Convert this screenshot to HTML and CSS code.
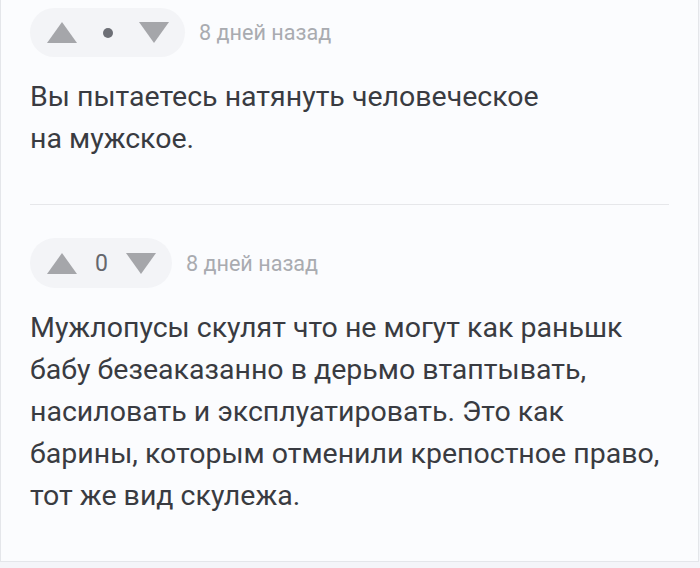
FILE: index.html
```html
<!DOCTYPE html>
<html lang="ru">
<head>
<meta charset="utf-8">
<link rel="stylesheet" href="styles.css">
</head>
<body>
<div class="frame">
  <div class="comment">
    <div class="meta">
      <div class="votes">
        <svg class="arrow" width="30" height="21" viewBox="0 0 30 21"><path d="M15 0 L30 21 L0 21 Z"/></svg>
        <span class="dot"></span>
        <svg class="arrow" width="30" height="21" viewBox="0 0 30 21"><path d="M0 0 L30 0 L15 21 Z"/></svg>
      </div>
      <span class="time">8 дней назад</span>
    </div>
    <p class="text">Вы пытаетесь натянуть человеческое<br>на мужское.</p>
  </div>
  <hr class="divider">
  <div class="comment second">
    <div class="meta">
      <div class="votes">
        <svg class="arrow" width="30" height="21" viewBox="0 0 30 21"><path d="M15 0 L30 21 L0 21 Z"/></svg>
        <span class="score">0</span>
        <svg class="arrow" width="30" height="21" viewBox="0 0 30 21"><path d="M0 0 L30 0 L15 21 Z"/></svg>
      </div>
      <span class="time">8 дней назад</span>
    </div>
    <p class="text">Мужлопусы скулят что не могут как раньшк<br>бабу безеаказанно в дерьмо втаптывать,<br>насиловать и эксплуатировать. Это как<br>барины, которым отменили крепостное право,<br>тот же вид скулежа.</p>
  </div>
</div>
</body>
</html>
```

FILE: styles.css
```css
html, body {
  margin: 0;
  padding: 0;
  background: #f4f5f9;
}
body {
  font-family: Roboto, "Noto Sans", sans-serif;
  width: 700px;
  height: 568px;
  overflow: hidden;
}
.frame {
  box-sizing: border-box;
  width: 699px;
  height: 562px;
  background: #fbfcfe;
  border-left: 1px solid #e4e6ea;
  border-right: 1px solid #e4e6ea;
  border-bottom: 1px solid #e4e6ea;
  padding-top: 8px;
}
.comment {
  padding: 0 29px;
}
.meta {
  display: flex;
  align-items: center;
  gap: 14px;
}
.votes {
  display: flex;
  align-items: center;
  height: 49px;
  padding: 0 16px 0 17px;
  gap: 26px;
  background: #f3f4f7;
  border-radius: 25px;
}
.second .votes {
  height: 50px;
  gap: 18px;
}
.arrow {
  display: block;
  fill: #a5a6aa;
}
.dot {
  width: 10px;
  height: 10px;
  border-radius: 50%;
  background: #6d6f76;
}
.score {
  font-size: 23px;
  color: #65676d;
  line-height: 1;
}
.time {
  font-size: 21.6px;
  color: #a9abb0;
}
.text {
  margin: 19px 0 0;
  font-size: 28.5px;
  line-height: 42px;
  color: #393b41;
  white-space: nowrap;
}
.divider {
  margin: 44px 29px 33px;
  border: 0;
  height: 1px;
  background: #e6e7ea;
}
```
